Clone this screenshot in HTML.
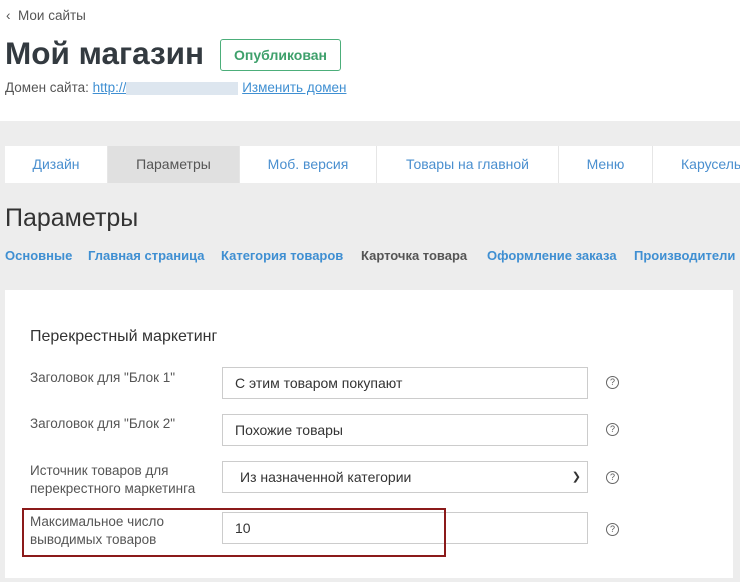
<!DOCTYPE html>
<html><head><meta charset="utf-8"><style>
*{box-sizing:border-box;margin:0;padding:0}
body{width:740px;height:582px;overflow:hidden;background:#fff;font-family:"Liberation Sans",sans-serif;position:relative;color:#333}
.a{position:absolute;white-space:nowrap}
.grey{position:absolute;left:0;top:121px;width:740px;height:461px;background:#ededed}
.tabs{position:absolute;left:5px;top:146px;width:740px;height:37px;background:#fff}
.tab{position:absolute;top:0;height:37px;line-height:37px;text-align:center;font-size:14px;color:#4a8fcf;border-right:1px solid #e6e6e6}
.sub{position:absolute;top:248px;font-size:13px;font-weight:bold;color:#3f8fd2;white-space:nowrap}
.panel{position:absolute;left:5px;top:290px;width:728px;height:288px;background:#fff}
.lbl{position:absolute;left:30px;font-size:13.5px;color:#555;line-height:18px}
.inp{position:absolute;left:222px;width:366px;height:32px;border:1px solid #ccc;font-size:14px;color:#333;line-height:30px;padding-left:12px;background:#fff}
.q{position:absolute;left:606px;width:13px;height:13px;border:1px solid #666;border-radius:50%;font-size:9px;line-height:11px;text-align:center;color:#555}
</style></head><body>
<div class="a" style="left:6px;top:8px;font-size:13.5px;color:#555">‹&nbsp; Мои сайты</div>
<div class="a" style="left:5px;top:35px;font-size:31.5px;font-weight:bold;color:#333a40">Мой магазин</div>
<div class="a" style="left:220px;top:39px;width:121px;height:32px;border:1px solid #4cae7a;border-radius:3px;color:#3ea06b;font-size:14px;font-weight:bold;line-height:30px;text-align:center">Опубликован</div>
<div class="a" style="left:5px;top:80px;font-size:13.5px;color:#555">Домен сайта: <span style="color:#3f8fd2;text-decoration:underline">http://</span><span style="display:inline-block;width:112px;height:13px;background:#dde6ef;vertical-align:middle"></span> <span style="color:#3f8fd2;text-decoration:underline">Изменить домен</span></div>
<div class="grey"></div>
<div class="tabs">
<div class="tab" style="left:0;width:103px">Дизайн</div>
<div class="tab" style="left:103px;width:132px;background:#e0e0e0;color:#555">Параметры</div>
<div class="tab" style="left:235px;width:137px">Моб. версия</div>
<div class="tab" style="left:372px;width:182px">Товары на главной</div>
<div class="tab" style="left:554px;width:94px">Меню</div>
<div class="tab" style="left:648px;width:100px;text-align:left;padding-left:28px;border:none">Карусель</div>
</div>
<div class="a" style="left:5px;top:204px;font-size:25px;color:#333">Параметры</div>
<div class="sub" style="left:5px">Основные</div>
<div class="sub" style="left:88px">Главная страница</div>
<div class="sub" style="left:221px">Категория товаров</div>
<div class="sub" style="left:361px;color:#555">Карточка товара</div>
<div class="sub" style="left:487px">Оформление заказа</div>
<div class="sub" style="left:634px">Производители</div>
<div class="panel"></div>
<div class="a" style="left:30px;top:328px;font-size:16px;color:#333">Перекрестный маркетинг</div>
<div class="lbl" style="top:369px">Заголовок для "Блок 1"</div>
<div class="inp" style="top:367px">С этим товаром покупают</div>
<div class="q" style="top:376px">?</div>
<div class="lbl" style="top:415px">Заголовок для "Блок 2"</div>
<div class="inp" style="top:414px">Похожие товары</div>
<div class="q" style="top:423px">?</div>
<div class="lbl" style="top:462px">Источник товаров для<br>перекрестного маркетинга</div>
<div class="inp" style="top:461px;padding-left:17px">Из назначенной категории<span style="position:absolute;right:6px;top:0;font-size:11px;color:#333">&#10095;</span></div>
<div class="q" style="top:471px">?</div>
<div class="lbl" style="top:513px">Максимальное число<br>выводимых товаров</div>
<div class="inp" style="top:512px">10</div>
<div class="q" style="top:523px">?</div>
<div class="a" style="left:22px;top:508px;width:424px;height:49px;border:2px solid #8b1a1a"></div>
</body></html>
